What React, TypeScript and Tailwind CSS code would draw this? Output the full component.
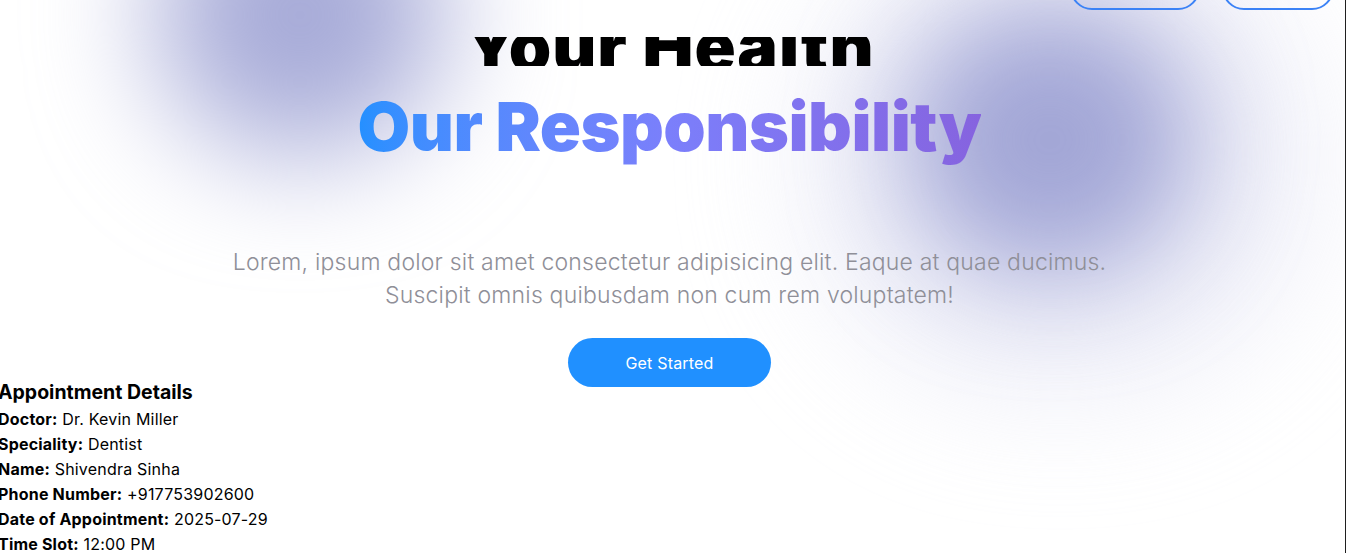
import React from "react";

export default function App() {
  const rows: [string, string][] = [
    ["Doctor:", "Dr. Kevin Miller"],
    ["Speciality:", "Dentist"],
    ["Name:", "Shivendra Sinha"],
    ["Phone Number:", " +917753902600"],
    ["Date of Appointment:", "2025-07-29"],
    ["Time Slot:", "12:00 PM"],
  ];
  return (
    <div
      className="relative w-[1346px] h-[553px] overflow-hidden bg-white border-r border-[#1f1f1f]"
      style={{ fontFamily: "Inter, 'Noto Sans', sans-serif" }}
    >
      {/* blurred blobs */}
      <div className="pointer-events-none absolute left-[155px] top-[-125px] w-[290px] h-[280px] rounded-full bg-[#a7abd8] blur-[60px]" />
      <div className="pointer-events-none absolute left-[800px] top-[-80px] w-[520px] h-[480px] rounded-full bg-[#e4e5f4] opacity-60 blur-[60px]" />
      <div className="pointer-events-none absolute left-[905px] top-[5px] w-[290px] h-[270px] rounded-full bg-[#a2a6d6] blur-[55px]" />

      <div className="relative flex flex-col">
        {/* header buttons (scrolled mostly out of view) */}
        <div className="flex justify-end gap-[22px] pr-[11px] mt-[-34px]">
          <button className="w-[130px] h-[44px] rounded-full border-2 border-[#3b82f6]" />
          <button className="w-[112px] h-[44px] rounded-full border-2 border-[#3b82f6]" />
        </div>

        {/* headline */}
        <div className="flex flex-col items-center pr-[6px]">
          <div className="h-[29px] mt-[27px] overflow-hidden flex items-end">
            <h1 className="text-[68px] leading-[68px] font-black text-black tracking-[1px] mb-[-14px]">
              Your Health
            </h1>
          </div>
          <h2 className="mt-[20px] text-[68px] leading-[80px] font-black tracking-[-0.5px] bg-gradient-to-r from-[#2490ff] via-[#7b7ffb] to-[#8663df] bg-clip-text text-transparent pb-[6px]">
            Our Responsibility
          </h2>
          <p className="mt-[74px] text-center text-[23px] leading-[33px] font-light tracking-[0.2px] text-[#8f8f98]">
            Lorem, ipsum dolor sit amet consectetur adipisicing elit. Eaque at quae ducimus.
            <br />
            Suscipit omnis quibusdam non cum rem voluptatem!
          </p>
          <button className="mt-[26px] w-[203px] h-[49px] rounded-full bg-[#2090ff] text-white text-[16px] font-normal tracking-[0.2px]">
            Get Started
          </button>
        </div>

        {/* appointment details */}
        <div className="ml-[-2px] mt-[-9px] text-black">
          <h3 className="text-[19.5px] leading-[29px] font-bold">Appointment Details</h3>
          {rows.map(([k, v]) => (
            <div key={k} className="text-[16px] leading-[25px] tracking-[0.2px]">
              <span className="font-bold">{k}</span> {v}
            </div>
          ))}
        </div>
      </div>
    </div>
  );
}
